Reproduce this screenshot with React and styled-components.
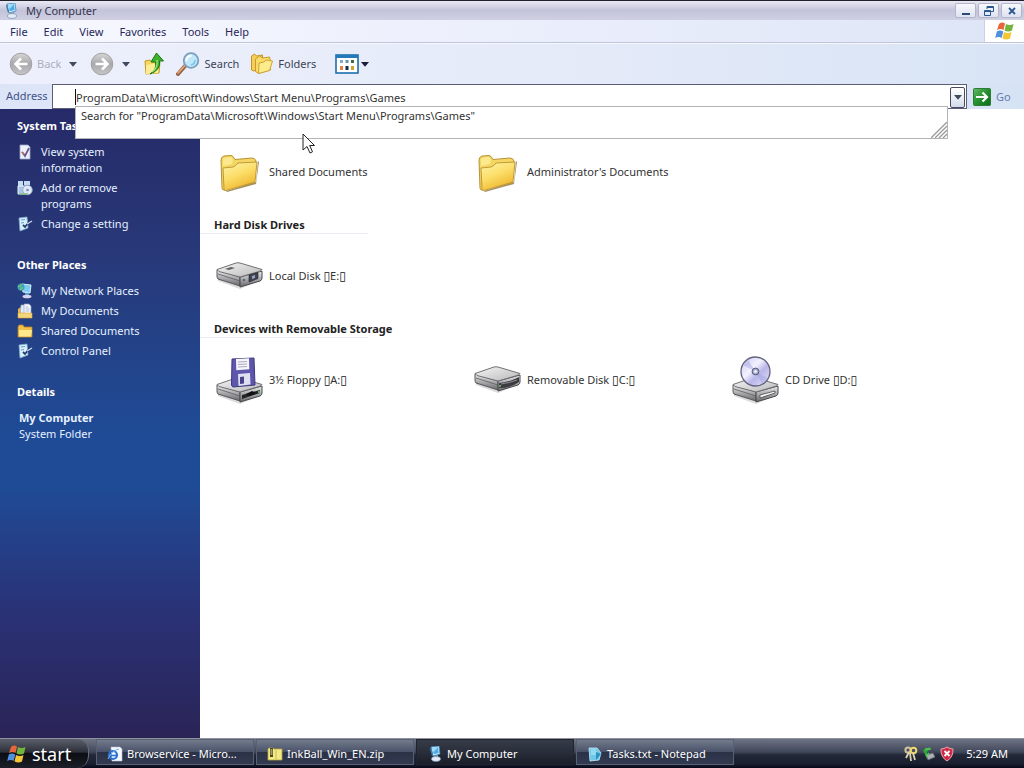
import React, { useState } from 'react';
import styled, { createGlobalStyle } from 'styled-components';

const GlobalStyle = createGlobalStyle`
  * {
    box-sizing: border-box;
  }
  body {
    margin: 0;
    overflow: hidden;
    font-family: 'Noto Sans', 'Open Sans', sans-serif;
    font-size: 11px;
    line-height: 16px;
    color: #333;
  }
  button, input {
    margin: 0;
    padding: 0;
    border: none;
    background: none;
    color: inherit;
    font: inherit;
  }
  a {
    color: inherit;
    text-decoration: none;
  }
  svg {
    display: block;
    flex: none;
  }
`;

const FlagIcon = ({ size }) => (
  <svg width={size} height={size} viewBox='0 0 20 20'>
    <path d='M4 3q3-2.500 6-.5L8.500 9q-3-2-6.500 0z' fill='#e8643a' />
    <path d='M11 3q3.500 2 7.500 0L17 9.500q-4 2-7.500 0z' fill='#73b53c' />
    <path d='M1.800 10.500q3-2 6.500 0L6.700 17q-3-2-6.500 0z' fill='#4f91de' />
    <path d='M9 11q4 2 7.500 0L15 17.500q-3.500 2-7.500 0z' fill='#f4c534' />
  </svg>
);

const ComputerIcon = ({ size }) => (
  <svg width={size} height={size} viewBox='0 0 16 16'>
    <path d='M4 1l8-1 1 8-7 2z' fill='#d8f1fb' stroke='#3d87b8' strokeWidth='.8' />
    <path d='M5.500 2l5.500-.7.7 5.700-5 1.300z' fill='#4aa9e6' />
    <path d='M5.500 2l5.500-.7-4.500 5z' fill='#9fdcfa' />
    <path d='M7 10l4-1v3H7z' fill='#7a9fbe' />
    <ellipse cx='9' cy='13' rx='4.500' ry='2.400' fill='#e3ecf6' stroke='#7590ae' strokeWidth='.7' />
    <path d='M3 3l1-2 2 8-1 1z' fill='#417ca8' />
  </svg>
);

const ArrowCircle = ({ forward }) => (
  <svg width='24' height='24' viewBox='0 0 24 24'>
    <defs>
      <linearGradient id='disc' x1='0' y1='0' x2='0' y2='1'>
        <stop offset='0' stopColor='#d6d6d6' />
        <stop offset='.5' stopColor='#a9a9ab' />
        <stop offset='1' stopColor='#c6c6c8' />
      </linearGradient>
    </defs>
    <circle cx='12' cy='12' r='10.800' fill='url(#disc)' stroke='#a2a2a6' />
    <path
      d={forward ? 'M5.500 12h11M12 6.500l5.500 5.500-5.500 5.500' : 'M18.500 12h-11M12 6.500L6.500 12l5.500 5.500'}
      fill='none'
      stroke='#fff'
      strokeWidth='2.600'
    />
  </svg>
);

const Caret = ({ color = '#3f4a5c' }) => (
  <svg width='8' height='5' viewBox='0 0 8 5'>
    <path d='M0 0h8L4 4.800z' fill={color} />
  </svg>
);

const UpIcon = () => (
  <svg width='22' height='24' viewBox='0 0 22 24'>
    <path d='M2 9l5-1 2 2h8l-1 11-13 1z' fill='#f5d75c' stroke='#c79b24' />
    <path d='M3 13l13-2-1 10-12 1z' fill='#fdee96' />
    <path d='M7 22q7-4 5.500-12H8L13.500 1l7 8h-4q1.500 9-9.500 13z' fill='#3fb12c' stroke='#1c7417' />
    <path d='M9 20q6-4 5-12' fill='none' stroke='#a5e283' strokeWidth='1.300' />
  </svg>
);

const SearchIcon = () => (
  <svg width='24' height='24' viewBox='0 0 24 24'>
    <path d='M9.500 13.500L2 22' stroke='#9c6140' strokeWidth='4' strokeLinecap='round' />
    <path d='M9 13.500L2 21' stroke='#e0ad82' strokeWidth='1.600' strokeLinecap='round' />
    <circle cx='15' cy='8.500' r='7.300' fill='#bfe8fb' stroke='#7d9fbc' strokeWidth='1.800' />
    <path d='M10.500 9q0-5 5-5.500' stroke='#fff' strokeWidth='2' fill='none' />
    <path d='M19 8q0 4-4 5' stroke='#72c4ec' strokeWidth='1.500' fill='none' />
  </svg>
);

const FoldersIcon = () => (
  <svg width='24' height='22' viewBox='0 0 24 22'>
    <path d='M1.500 3l3-2 2 2 6-1v13l-9 3-2-1z' fill='#f5cf58' stroke='#c2922c' />
    <path d='M5.500 6l4-3 3 2 7-1 1 4v9l-12 3.500-3-2z' fill='#f9dc68' stroke='#c99a2c' />
    <path d='M9 10l5-1 2-2 6.500 1-3 9.500-11 3z' fill='#fdec8b' stroke='#cfa436' />
  </svg>
);

const ViewsIcon = () => (
  <svg width='24' height='20' viewBox='0 0 24 20'>
    <rect x='1' y='1' width='22' height='18' fill='#fff' stroke='#1c6fae' strokeWidth='1.600' />
    <path d='M1 1h22v3H1z' fill='#2479b8' />
    <path d='M5 6h3v3H5z' fill='#83a9cf' />
    <path d='M10.500 6h3v3h-3z' fill='#6594ab' />
    <path d='M16 6h3v3h-3z' fill='#426c43' />
    <path d='M5 12h3v4H5z' fill='#e08446' />
    <path d='M10.500 12h3v4h-3z' fill='#17284d' />
    <path d='M16 12h3v4h-3z' fill='#cba435' />
  </svg>
);

const GoIcon = () => (
  <svg width='18' height='18' viewBox='0 0 18 18'>
    <defs>
      <linearGradient id='goFill' x1='0' y1='0' x2='1' y2='1'>
        <stop offset='0' stopColor='#66b96a' />
        <stop offset='.5' stopColor='#24902d' />
        <stop offset='1' stopColor='#0d6a18' />
      </linearGradient>
    </defs>
    <rect x='.5' y='.5' width='17' height='17' rx='1' fill='url(#goFill)' stroke='#2c7c37' />
    <path d='M3 9h11M9.500 4.500L14 9l-4.500 4.500' fill='none' stroke='#fff' strokeWidth='2.200' />
  </svg>
);

const CheckPageIcon = () => (
  <svg width='16' height='16' viewBox='0 0 16 16'>
    <path d='M3 1h8l2 2v12H3z' fill='#eef1fa' stroke='#9ba5c7' strokeWidth='.8' />
    <path d='M5 8l3 4 4-8' fill='none' stroke='#6a5c8f' strokeWidth='1.800' />
    <path d='M5 8l2 2' stroke='#d06b55' strokeWidth='1.600' />
  </svg>
);

const ProgramsIcon = () => (
  <svg width='16' height='16' viewBox='0 0 16 16'>
    <path d='M1 1h5v5H1zM7 1h6v4H7z' fill='#c4dcef' />
    <path d='M1 6h9v8H1z' fill='#a9c7e2' stroke='#e8f2fa' />
    <circle cx='10.500' cy='10' r='4.800' fill='#dfe8f4' stroke='#8ba6c6' strokeWidth='.8' />
    <circle cx='10.500' cy='10' r='1.300' fill='#7590b8' />
    <path d='M2 14h9' stroke='#7eb68a' strokeWidth='1.500' />
  </svg>
);

const SettingIcon = () => (
  <svg width='16' height='16' viewBox='0 0 16 16'>
    <path d='M2 2l8-1 1 11-8 3z' fill='#d9effc' stroke='#7cabd0' strokeWidth='.8' />
    <path d='M4 4l4-.5M4 7l3-.5' stroke='#5fa0cf' strokeWidth='1.200' />
    <path d='M6 9l2 2 4-5' fill='none' stroke='#213f70' strokeWidth='1.800' />
    <path d='M10 8l5-3' stroke='#d3dce8' strokeWidth='1.200' />
  </svg>
);

const NetworkIcon = () => (
  <svg width='16' height='16' viewBox='0 0 16 16'>
    <path d='M5 1l9 1-1 8-7-1z' fill='#7dcbf1' stroke='#d1f0fc' />
    <circle cx='4' cy='4' r='3.500' fill='#389bc9' />
    <path d='M1 3q3 1 3-2M3 7l3-3' stroke='#66c276' strokeWidth='2' />
    <path d='M8 10h4v2H8z' fill='#6096c8' />
    <ellipse cx='10' cy='13.500' rx='4.500' ry='1.800' fill='#d8d2ef' />
  </svg>
);

const DocumentsIcon = () => (
  <svg width='16' height='16' viewBox='0 0 16 16'>
    <path d='M1 6l3-2v9H1z' fill='#e8b94b' />
    <path d='M4 2h5l1 11H3z' fill='#e6eefa' stroke='#8a9fc0' strokeWidth='.7' />
    <path d='M7 1h5l2 2v9H7z' fill='#fafcff' stroke='#8a9fc0' strokeWidth='.7' />
    <path d='M8.500 4h3M8.500 6h4M8.500 8h4' stroke='#8eabd2' strokeWidth='.8' />
    <path d='M1 10h14v5H1z' fill='#f3d679' stroke='#d8a340' strokeWidth='.6' />
  </svg>
);

const SmallFolderIcon = () => (
  <svg width='16' height='16' viewBox='0 0 16 16'>
    <path d='M1 4l1-2h4l1 2h8v10H1z' fill='#f0c04a' stroke='#b98325' strokeWidth='.8' />
    <path d='M2 7h13l-1 6.500H2z' fill='#ffe88b' />
  </svg>
);

const FolderIcon = () => (
  <svg width='48' height='48' viewBox='0 0 48 48'>
    <defs>
      <linearGradient id='folderFront' x1='0' y1='0' x2='.5' y2='1'>
        <stop offset='0' stopColor='#fff6ae' />
        <stop offset='.55' stopColor='#fbdc66' />
        <stop offset='1' stopColor='#eeb62e' />
      </linearGradient>
    </defs>
    <path d='M11 43l30-9 2-21 1 1-3 22-29 8z' fill='#8b7440' opacity='.8' />
    <path d='M6 12q0-3 3-4l7-.5q2 0 4 4l17-1.500q3 0 4 3L39 35 9 42q-2 0-2-2z' fill='#f4d762' stroke='#b89235' />
    <path d='M8 20l10-1q3-1 5-4l19-1-2 20-29 8.500q-2 .5-2-2z' fill='url(#folderFront)' stroke='#c19a3a' />
    <path d='M8 12q0-3 8-3l2 3-1 4-9 2z' fill='#fbea8d' />
  </svg>
);

// shared body of the drive icons, y moves it down for drives with media on top
const DriveBody = ({ y = 0, children }) => (
  <g transform={`translate(0 ${y})`}>
    <defs>
      <linearGradient id='driveTop' x1='0' y1='0' x2='1' y2='1'>
        <stop offset='0' stopColor='#f5f5f5' />
        <stop offset='1' stopColor='#b8b8ba' />
      </linearGradient>
      <linearGradient id='driveSide' x1='0' y1='0' x2='0' y2='1'>
        <stop offset='0' stopColor='#ededee' />
        <stop offset='.5' stopColor='#aaaaad' />
        <stop offset='1' stopColor='#67676b' />
      </linearGradient>
    </defs>
    <path d='M2 20l22 9 23-9-1 5-21 9L3 26z' fill='#999' opacity='.35' />
    <path d='M2 15l23 7v9L3 24q-1-1-1-3z' fill='url(#driveSide)' stroke='#58585c' />
    <path d='M25 22l22-6v7q0 2-2 3l-20 6z' fill='url(#driveSide)' stroke='#48484c' />
    <path d='M2 14.500L21 8q2-.5 4 0l22 6.500q-1 1.500-3 2L25 22 4 16.500z' fill='url(#driveTop)' stroke='#717175' />
    <path d='M3 19l22 7' stroke='#5d5d61' strokeWidth='.8' />
    {children}
  </g>
);

const HardDiskIcon = () => (
  <svg width='48' height='48' viewBox='0 0 48 48'>
    <DriveBody y={3}>
      <path d='M10 14l6-2 4 1-6 2z' fill='#606064' />
      <path d='M34 20l9-2.500v6L34 27z' fill='#3f4354' stroke='#222' strokeWidth='.6' />
      <path d='M37 21l3-1v3l-3 1z' fill='#9ba2b6' />
      <circle cx='29' cy='25' r='1' fill='#3e4b75' />
    </DriveBody>
  </svg>
);

const RemovableIcon = () => (
  <svg width='48' height='48' viewBox='0 0 48 48'>
    <DriveBody y={3}>
      <path d='M26 24q8 0 20-6v5q-8 6-20 6z' fill='#3b3b40' />
      <path d='M28 25q8-1 16-4' stroke='#8e8e94' fill='none' />
      <circle cx='27' cy='27' r='1' fill='#6fd066' />
    </DriveBody>
  </svg>
);

const FloppyIcon = () => (
  <svg width='48' height='48' viewBox='0 0 48 48'>
    <DriveBody y={14}>
      <path d='M27 25l18-5v3l-18 6z' fill='#242428' />
      <path d='M31 24l6-3 4 2-6 3z' fill='#111' />
      <circle cx='44' cy='22' r='1' fill='#80d070' />
    </DriveBody>
    <path d='M17 3l22-1 1 27-22 2q-2-1-1.500-3z' fill='#5e56ae' stroke='#3f397c' />
    <path d='M21 3l13-.7.3 11-13 .9z' fill='#f5f5fa' />
    <path d='M23 6l9-.5M23 8.500l9-.5M23 11l9-.5' stroke='#aaaac2' />
    <path d='M23 18l12-1 .5 11.500-12 1.500z' fill='#dde0ee' />
    <path d='M25 21l4-.5v7l-4 .5z' fill='#49418c' />
  </svg>
);

const CdIcon = () => (
  <svg width='48' height='48' viewBox='0 0 48 48'>
    <defs>
      <linearGradient id='cdFill' x1='0' y1='0' x2='1' y2='1'>
        <stop offset='0' stopColor='#c4c5ee' />
        <stop offset='.4' stopColor='#f3f2ff' />
        <stop offset='.6' stopColor='#b8b6e8' />
        <stop offset='1' stopColor='#e7e6fb' />
      </linearGradient>
    </defs>
    <DriveBody y={14}>
      <path d='M29 25l15-4v2l-15 5z' fill='#fafafa' stroke='#333' strokeWidth='.7' />
    </DriveBody>
    <circle cx='24.500' cy='15.500' r='14.500' fill='url(#cdFill)' stroke='#62627c' strokeWidth='1.300' />
    <path d='M24.500 15.500L12 9l5-5zM24.500 15.500L37 22l-6 6z' fill='#9c9be0' opacity='.4' />
    <circle cx='24.500' cy='15.500' r='3.400' fill='#a9acc9' stroke='#565a7c' />
    <circle cx='24.500' cy='15.500' r='1.300' fill='#fff' />
  </svg>
);

const BrowserIcon = () => (
  <svg width='16' height='16' viewBox='0 0 16 16'>
    <path d='M4 1h9l2 2v12H5z' fill='#f4f8ff' stroke='#b4c4dc' strokeWidth='.6' />
    <circle cx='6' cy='9' r='4' fill='none' stroke='#2c73d4' strokeWidth='2.200' />
    <path d='M2 9.500h8' stroke='#2c73d4' strokeWidth='1.600' />
    <path d='M1 13Q5 4 12 3' stroke='#75b5f2' fill='none' />
  </svg>
);

const ZipIcon = () => (
  <svg width='16' height='16' viewBox='0 0 16 16'>
    <path d='M1 3l1-1h4l1 1h8v11H1z' fill='#f2ea87' stroke='#b8a43c' strokeWidth='.8' />
    <path d='M3 2h3v9H3z' fill='#4a4420' />
    <path d='M3.500 4h2M3.500 6h2M3.500 8h2' stroke='#f8f3b0' />
    <path d='M9 4v9' stroke='#cdbb55' />
  </svg>
);

const NotepadIcon = () => (
  <svg width='16' height='16' viewBox='0 0 16 16'>
    <path d='M2 2h8l4 5-2 7-9 1z' fill='#6fc8e8' stroke='#c5edfa' strokeWidth='.8' />
    <path d='M4 4h5M4 6h6M4 8h6' stroke='#b8ecfa' />
    <path d='M9 6l5 2-5 6z' fill='#2a93c5' />
  </svg>
);

const KeysIcon = () => (
  <svg width='14' height='16' viewBox='0 0 14 16'>
    <circle cx='4' cy='4' r='2.600' fill='none' stroke='#cfc49a' strokeWidth='2' />
    <circle cx='9.500' cy='4.500' r='2.800' fill='none' stroke='#f1d76b' strokeWidth='2' />
    <path d='M5 6l-3 6M9 7l2 7M6 7l1 8' stroke='#ddd3b0' strokeWidth='1.800' />
  </svg>
);

const DeviceIcon = () => (
  <svg width='14' height='16' viewBox='0 0 14 16'>
    <path d='M4 9l7-2 2 4-7 3z' fill='#a9b1b6' stroke='#60686e' strokeWidth='.7' />
    <path d='M5 13L1 4l7-3-1 3q-2 1-2 3z' fill='#2fa93a' />
    <path d='M3 3h6M7 7l-3 3' stroke='#54c85a' strokeWidth='1.600' />
  </svg>
);

const ShieldIcon = () => (
  <svg width='14' height='16' viewBox='0 0 14 16'>
    <path d='M7 1q3 2 6 2 .5 8-6 12Q.5 11 1 3q3 0 6-2z' fill='#cf2b46' stroke='#eea6b2' />
    <path d='M4.500 5l5 5M9.500 5l-5 5' stroke='#fff' strokeWidth='1.800' />
  </svg>
);

const menus = ['File', 'Edit', 'View', 'Favorites', 'Tools', 'Help'];

const tasks = [
  { icon: <CheckPageIcon />, label: 'View system information' },
  { icon: <ProgramsIcon />, label: 'Add or remove programs' },
  { icon: <SettingIcon />, label: 'Change a setting' },
];

const places = [
  { icon: <NetworkIcon />, label: 'My Network Places' },
  { icon: <DocumentsIcon />, label: 'My Documents' },
  { icon: <SmallFolderIcon />, label: 'Shared Documents' },
  { icon: <SettingIcon />, label: 'Control Panel' },
];

const groups = [
  {
    items: [
      { icon: <FolderIcon />, label: 'Shared Documents' },
      { icon: <FolderIcon />, label: "Administrator's Documents" },
    ],
  },
  {
    title: 'Hard Disk Drives',
    items: [{ icon: <HardDiskIcon />, label: 'Local Disk', drive: 'E:' }],
  },
  {
    title: 'Devices with Removable Storage',
    items: [
      { icon: <FloppyIcon />, label: '3½ Floppy', drive: 'A:' },
      { icon: <RemovableIcon />, label: 'Removable Disk', drive: 'C:' },
      { icon: <CdIcon />, label: 'CD Drive', drive: 'D:' },
    ],
  },
];

const windows = [
  { icon: <BrowserIcon />, label: 'Browservice - Micro...' },
  { icon: <ZipIcon />, label: 'InkBall_Win_EN.zip' },
  { icon: <ComputerIcon size={16} />, label: 'My Computer', active: true },
  { icon: <NotepadIcon />, label: 'Tasks.txt - Notepad' },
];

export default function App() {
  const [address, setAddress] = useState(
    'ProgramData\\Microsoft\\Windows\\Start Menu\\Programs\\Games'
  );

  return (
    <Desktop>
      <GlobalStyle />
      <TitleBar>
        <ComputerIcon size={16} />
        <Title>My Computer</Title>
        <WindowButton aria-label='Minimize'>
          <svg width='12' height='12' viewBox='0 0 12 12'>
            <path d='M2 9h8' stroke='#2c4a78' strokeWidth='2' />
          </svg>
        </WindowButton>
        <WindowButton aria-label='Restore'>
          <svg width='12' height='12' viewBox='0 0 12 12' fill='none' stroke='#28588f'>
            <path d='M4 4V1.500h6.500v5H8M4 2.500h6.500' />
            <path d='M1.500 5.500h6v5h-6zM1.500 6.500h6' />
          </svg>
        </WindowButton>
        <WindowButton aria-label='Close'>
          <svg width='12' height='12' viewBox='0 0 12 12'>
            <path d='M3 3l6 6M9 3L3 9' stroke='#28588f' strokeWidth='1.800' />
          </svg>
        </WindowButton>
      </TitleBar>

      <MenuBar>
        {menus.map((menu) => (
          <MenuButton key={menu}>{menu}</MenuButton>
        ))}
        <Throbber>
          <FlagIcon size={20} />
        </Throbber>
      </MenuBar>

      <Toolbar>
        <ToolButton disabled>
          <ArrowCircle />
          Back
        </ToolButton>
        <ArrowButton aria-label='Back history'>
          <Caret />
        </ArrowButton>
        <ToolButton aria-label='Forward' disabled>
          <ArrowCircle forward />
        </ToolButton>
        <ArrowButton aria-label='Forward history'>
          <Caret />
        </ArrowButton>
        <ToolButton aria-label='Up'>
          <UpIcon />
        </ToolButton>
        <ToolButton>
          <SearchIcon />
          Search
        </ToolButton>
        <ToolButton>
          <FoldersIcon />
          Folders
        </ToolButton>
        <ViewsButton aria-label='Views'>
          <ViewsIcon />
          <Caret color='#1d1b3c' />
        </ViewsButton>
      </Toolbar>

      <AddressBar>
        <AddressLabel htmlFor='address'>Address</AddressLabel>
        <Combo>
          <TextCursor />
          <AddressInput
            id='address'
            type='text'
            spellCheck='false'
            value={address}
            onChange={(event) => setAddress(event.target.value)}
          />
          <DropButton aria-label='Show addresses'>
            <Caret />
          </DropButton>
          <Suggestions>
            <Suggestion>Search for "{address}"</Suggestion>
            <Grip width='16' height='16' viewBox='0 0 16 16'>
              <path d='M0 16L16 0M4 16L16 4M8 16l8-8M12 16l4-4' stroke='#999' strokeWidth='1.300' />
            </Grip>
          </Suggestions>
        </Combo>
        <GoButton>
          <GoIcon />
          Go
        </GoButton>
      </AddressBar>

      <Main>
        <Sidebar>
          <Panel>
            <PanelTitle>System Tasks</PanelTitle>
            {tasks.map((task) => (
              <PanelLink href='#' key={task.label}>
                {task.icon}
                <span>{task.label}</span>
              </PanelLink>
            ))}
          </Panel>
          <Panel>
            <PanelTitle>Other Places</PanelTitle>
            {places.map((place) => (
              <PanelLink href='#' key={place.label}>
                {place.icon}
                <span>{place.label}</span>
              </PanelLink>
            ))}
          </Panel>
          <Panel>
            <PanelTitle>Details</PanelTitle>
            <Details>
              <strong>My Computer</strong>
              <br />
              System Folder
            </Details>
          </Panel>
        </Sidebar>

        <Content>
          {groups.map((group, index) => (
            <section key={index}>
              {group.title && <GroupTitle>{group.title}</GroupTitle>}
              <Items>
                {group.items.map((item) => (
                  <Item key={item.label}>
                    {item.icon}
                    <span>
                      {item.label}
                      {item.drive && (
                        <>
                          {' '}
                          <Tofu>▯</Tofu>
                          {item.drive}
                          <Tofu>▯</Tofu>
                        </>
                      )}
                    </span>
                  </Item>
                ))}
              </Items>
            </section>
          ))}
        </Content>
      </Main>

      <Taskbar>
        <StartButton>
          <FlagIcon size={20} />
          start
        </StartButton>
        {windows.map((item) => (
          <TaskButton key={item.label} $active={item.active}>
            {item.icon}
            {item.label}
          </TaskButton>
        ))}
        <Tray>
          <KeysIcon />
          <DeviceIcon />
          <ShieldIcon />
          <Clock>5:29 AM</Clock>
        </Tray>
      </Taskbar>

      <Pointer width='14' height='22' viewBox='0 0 14 22'>
        <path
          d='M1 1v16l4-3.500 3 6.500 2.500-1.200L7.700 12.500H12.500z'
          fill='#fff'
          stroke='#222'
        />
      </Pointer>
    </Desktop>
  );
}

const Desktop = styled.div`
  display: flex;
  flex-direction: column;
  height: 100vh;
`;

const TitleBar = styled.header`
  display: flex;
  align-items: center;
  height: 20px;
  padding: 0 2px 0 3px;
  gap: 2px;
  border-top: 1px solid #22202c;
  background: linear-gradient(#e9e9f4, #c3c3da 50%, #cfd0e3);
`;

const Title = styled.span`
  flex: 1;
  padding: 1px 0 0 5px;
  color: #34344a;
`;

const WindowButton = styled.button`
  display: flex;
  align-items: center;
  justify-content: center;
  width: 21px;
  height: 15px;
  border: 1px solid #b3b6cb;
  border-radius: 2px;
  background: linear-gradient(#f8f9fd, #dfe2f0);
`;

const MenuBar = styled.nav`
  display: flex;
  align-items: center;
  height: 23px;
  padding-left: 10px;
  gap: 16px;
  border-bottom: 1px solid #c0c4da;
  background: linear-gradient(90deg, #f7f8ff, #e9edfb 60%, #dde5f6);
  color: #28285a;
`;

const MenuButton = styled.button`
  padding-top: 2px;
`;

const Throbber = styled.div`
  display: flex;
  align-items: center;
  justify-content: center;
  width: 40px;
  height: 22px;
  margin-left: auto;
  border-left: 1px solid #ccd1e2;
  background: #fff;
`;

const Toolbar = styled.div`
  display: flex;
  align-items: center;
  height: 41px;
  padding-left: 9px;
  border-top: 1px solid #f8f9ff;
  background: linear-gradient(90deg, #edf0fc, #e6ebf9 50%, #d8e4f5);
  color: #3d4354;
`;

const ToolButton = styled.button`
  display: flex;
  align-items: center;
  gap: 4px;
  margin-right: 11px;

  &:disabled {
    margin-right: 8px;
    color: #a9afbf;
  }
`;

const ArrowButton = styled.button`
  margin-right: 13px;
`;

const ViewsButton = styled.button`
  display: flex;
  align-items: center;
  gap: 2px;
  margin-left: 8px;
`;

const AddressBar = styled.div`
  display: flex;
  height: 25px;
  background: linear-gradient(90deg, #dce5f7, #e6eaf8 50%, #d6e3f5);
`;

const AddressLabel = styled.label`
  width: 52px;
  padding: 4px 0 0 6px;
  color: #42528a;
`;

const Combo = styled.div`
  position: relative;
  display: flex;
  align-items: center;
  flex: 1;
  padding: 1px 1px 0 22px;
  border: 1px solid #5c5e78;
  background: #fff;
`;

const TextCursor = styled.span`
  width: 1px;
  height: 16px;
  background: #111;
`;

const AddressInput = styled.input`
  flex: 1;
  min-width: 0;
  height: 18px;
  outline: none;
`;

const DropButton = styled.button`
  display: flex;
  align-items: center;
  justify-content: center;
  width: 15px;
  height: 21px;
  border: 1px solid #4a4c60;
  border-radius: 2px;
  background: linear-gradient(#fff, #eceef6 50%, #d3d9ea);
`;

const Suggestions = styled.div`
  position: absolute;
  top: 21px;
  left: 22px;
  right: 18px;
  z-index: 1;
  height: 33px;
  border: 1px solid #b4b4b8;
  background: #fff;
`;

const Suggestion = styled.button`
  display: block;
  width: 100%;
  padding: 1px 0 0 5px;
  text-align: left;
`;

const Grip = styled.svg`
  position: absolute;
  right: 0;
  bottom: 0;
`;

const GoButton = styled.button`
  display: flex;
  align-items: center;
  gap: 5px;
  width: 57px;
  padding-left: 6px;
  color: #6480b0;
`;

const Main = styled.main`
  display: flex;
  flex: 1;
  min-height: 0;
  background: #fff;
`;

const Sidebar = styled.aside`
  display: flex;
  flex-direction: column;
  gap: 25px;
  width: 200px;
  padding: 9px 17px;
  background: linear-gradient(#262a68, #283878 22%, #1f4b96 52%, #1f4b96 60%, #2a3276 80%, #2a2456);
  color: #e6f1ff;
`;

const Panel = styled.section`
  display: flex;
  flex-direction: column;
  gap: 4px;
`;

const PanelTitle = styled.h2`
  margin: 0 0 6px;
  font-size: 11px;
  color: #fff;
`;

const PanelLink = styled.a`
  display: flex;
  gap: 8px;
  max-width: 130px;
`;

const Details = styled.p`
  margin: 0;
  padding-left: 2px;
`;

const Content = styled.div`
  display: flex;
  flex-direction: column;
  flex: 1;
  gap: 21px;
  padding-top: 39px;
`;

const GroupTitle = styled.h2`
  width: 168px;
  margin: 0 0 18px;
  padding-left: 14px;
  border-bottom: 1px solid #ececf2;
  font-size: 11px;
  white-space: nowrap;
  color: #222;
`;

const Items = styled.div`
  display: grid;
  grid-template-columns: repeat(auto-fill, 258px);
  padding-left: 15px;
`;

const Item = styled.button`
  display: flex;
  align-items: center;
  gap: 6px;
  text-align: left;
`;

const Tofu = styled.span`
  font-family: 'DejaVu Sans', sans-serif;
  font-size: 12px;
  color: #111;
`;

const Taskbar = styled.footer`
  display: flex;
  height: 30px;
  gap: 2px;
  border-top: 1px solid #8f929e;
  background: linear-gradient(#6e7382, #40475a 45%, #232838 55%, #1b2030 85%, #060818);
  color: #fff;
`;

const StartButton = styled.button`
  display: flex;
  align-items: center;
  gap: 5px;
  width: 89px;
  margin-right: 5px;
  padding-left: 7px;
  border-right: 1px solid #666b78;
  border-radius: 0 12px 12px 0;
  background: linear-gradient(#5b5f6b, #2d3039 45%, #0c0e14 50%, #1c1f28);
  font-size: 18px;
`;

const TaskButton = styled.button`
  display: flex;
  align-items: center;
  gap: 4px;
  flex: 0 1 158px;
  height: 26px;
  padding: 4px 8px 0 10px;
  border: 1px solid ${(props) => (props.$active ? '#20242e' : '#586074')};
  background: ${(props) =>
    props.$active
      ? 'linear-gradient(#363b48, #292e3a 50%, #1a1e29)'
      : 'linear-gradient(#727a8c, #4b536a 48%, #2b3246 52%, #333b52)'};
  white-space: nowrap;
`;

const Tray = styled.div`
  display: flex;
  align-items: center;
  gap: 4px;
  margin-left: auto;
  padding-right: 16px;
`;

const Clock = styled.time`
  margin-left: 8px;
`;

const Pointer = styled.svg`
  position: absolute;
  top: 133px;
  left: 302px;
  z-index: 2;
`;
